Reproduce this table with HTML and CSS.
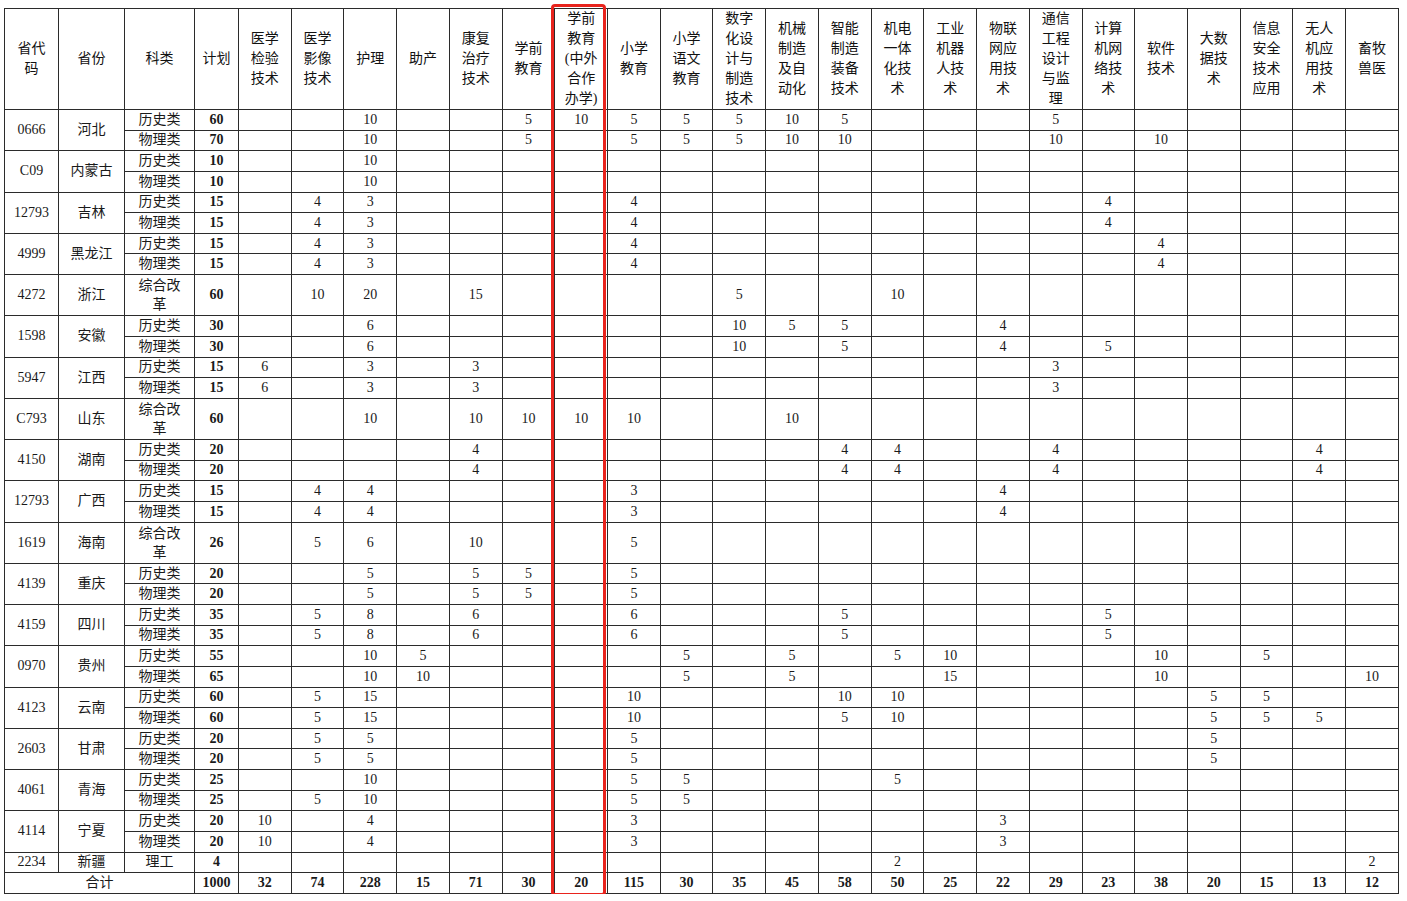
FILE: index.html
```html
<!DOCTYPE html>
<html lang="zh-CN">
<head>
<meta charset="utf-8">
<title>招生计划表</title>
<link rel="stylesheet" href="styles.css">
</head>
<body>
<div class="sheet">
<table class="plan-table">
<colgroup>
<col class="c-code"><col class="c-prov"><col class="c-cat"><col class="c-plan">
<col class="c-major"><col class="c-major"><col class="c-major"><col class="c-major"><col class="c-major"><col class="c-major"><col class="c-major"><col class="c-major"><col class="c-major"><col class="c-major"><col class="c-major">
<col class="c-major"><col class="c-major"><col class="c-major"><col class="c-major"><col class="c-major"><col class="c-major"><col class="c-major"><col class="c-major"><col class="c-major"><col class="c-major"><col class="c-major">
</colgroup>
<thead>
<tr class="head-row">
<th>省代<br>码</th><th>省份</th><th>科类</th><th>计划</th>
<th>医学<br>检验<br>技术</th>
<th>医学<br>影像<br>技术</th>
<th>护理</th>
<th>助产</th>
<th>康复<br>治疗<br>技术</th>
<th>学前<br>教育</th>
<th>学前<br>教育<br>(中外<br>合作<br>办学)</th>
<th>小学<br>教育</th>
<th>小学<br>语文<br>教育</th>
<th>数字<br>化设<br>计与<br>制造<br>技术</th>
<th>机械<br>制造<br>及自<br>动化</th>
<th>智能<br>制造<br>装备<br>技术</th>
<th>机电<br>一体<br>化技<br>术</th>
<th>工业<br>机器<br>人技<br>术</th>
<th>物联<br>网应<br>用技<br>术</th>
<th>通信<br>工程<br>设计<br>与监<br>理</th>
<th>计算<br>机网<br>络技<br>术</th>
<th>软件<br>技术</th>
<th>大数<br>据技<br>术</th>
<th>信息<br>安全<br>技术<br>应用</th>
<th>无人<br>机应<br>用技<br>术</th>
<th>畜牧<br>兽医</th>
</tr>
</thead>
<tbody>
<tr><td rowspan="2">0666</td><td rowspan="2">河北</td><td>历史类</td><td class="bold">60</td>
<td></td><td></td><td>10</td><td></td><td></td><td>5</td><td>10</td><td>5</td><td>5</td><td>5</td><td>10</td><td>5</td><td></td><td></td><td></td><td>5</td><td></td><td></td><td></td><td></td><td></td><td></td></tr>
<tr><td>物理类</td><td class="bold">70</td>
<td></td><td></td><td>10</td><td></td><td></td><td>5</td><td></td><td>5</td><td>5</td><td>5</td><td>10</td><td>10</td><td></td><td></td><td></td><td>10</td><td></td><td>10</td><td></td><td></td><td></td><td></td></tr>

<tr><td rowspan="2">C09</td><td rowspan="2">内蒙古</td><td>历史类</td><td class="bold">10</td>
<td></td><td></td><td>10</td><td></td><td></td><td></td><td></td><td></td><td></td><td></td><td></td><td></td><td></td><td></td><td></td><td></td><td></td><td></td><td></td><td></td><td></td><td></td></tr>
<tr><td>物理类</td><td class="bold">10</td>
<td></td><td></td><td>10</td><td></td><td></td><td></td><td></td><td></td><td></td><td></td><td></td><td></td><td></td><td></td><td></td><td></td><td></td><td></td><td></td><td></td><td></td><td></td></tr>

<tr><td rowspan="2">12793</td><td rowspan="2">吉林</td><td>历史类</td><td class="bold">15</td>
<td></td><td>4</td><td>3</td><td></td><td></td><td></td><td></td><td>4</td><td></td><td></td><td></td><td></td><td></td><td></td><td></td><td></td><td>4</td><td></td><td></td><td></td><td></td><td></td></tr>
<tr><td>物理类</td><td class="bold">15</td>
<td></td><td>4</td><td>3</td><td></td><td></td><td></td><td></td><td>4</td><td></td><td></td><td></td><td></td><td></td><td></td><td></td><td></td><td>4</td><td></td><td></td><td></td><td></td><td></td></tr>

<tr><td rowspan="2">4999</td><td rowspan="2">黑龙江</td><td>历史类</td><td class="bold">15</td>
<td></td><td>4</td><td>3</td><td></td><td></td><td></td><td></td><td>4</td><td></td><td></td><td></td><td></td><td></td><td></td><td></td><td></td><td></td><td>4</td><td></td><td></td><td></td><td></td></tr>
<tr><td>物理类</td><td class="bold">15</td>
<td></td><td>4</td><td>3</td><td></td><td></td><td></td><td></td><td>4</td><td></td><td></td><td></td><td></td><td></td><td></td><td></td><td></td><td></td><td>4</td><td></td><td></td><td></td><td></td></tr>

<tr class="tall"><td>4272</td><td>浙江</td><td class="wrap">综合改<br>革</td><td class="bold">60</td>
<td></td><td>10</td><td>20</td><td></td><td>15</td><td></td><td></td><td></td><td></td><td>5</td><td></td><td></td><td>10</td><td></td><td></td><td></td><td></td><td></td><td></td><td></td><td></td><td></td></tr>

<tr><td rowspan="2">1598</td><td rowspan="2">安徽</td><td>历史类</td><td class="bold">30</td>
<td></td><td></td><td>6</td><td></td><td></td><td></td><td></td><td></td><td></td><td>10</td><td>5</td><td>5</td><td></td><td></td><td>4</td><td></td><td></td><td></td><td></td><td></td><td></td><td></td></tr>
<tr><td>物理类</td><td class="bold">30</td>
<td></td><td></td><td>6</td><td></td><td></td><td></td><td></td><td></td><td></td><td>10</td><td></td><td>5</td><td></td><td></td><td>4</td><td></td><td>5</td><td></td><td></td><td></td><td></td><td></td></tr>

<tr><td rowspan="2">5947</td><td rowspan="2">江西</td><td>历史类</td><td class="bold">15</td>
<td>6</td><td></td><td>3</td><td></td><td>3</td><td></td><td></td><td></td><td></td><td></td><td></td><td></td><td></td><td></td><td></td><td>3</td><td></td><td></td><td></td><td></td><td></td><td></td></tr>
<tr><td>物理类</td><td class="bold">15</td>
<td>6</td><td></td><td>3</td><td></td><td>3</td><td></td><td></td><td></td><td></td><td></td><td></td><td></td><td></td><td></td><td></td><td>3</td><td></td><td></td><td></td><td></td><td></td><td></td></tr>

<tr class="tall"><td>C793</td><td>山东</td><td class="wrap">综合改<br>革</td><td class="bold">60</td>
<td></td><td></td><td>10</td><td></td><td>10</td><td>10</td><td>10</td><td>10</td><td></td><td></td><td>10</td><td></td><td></td><td></td><td></td><td></td><td></td><td></td><td></td><td></td><td></td><td></td></tr>

<tr><td rowspan="2">4150</td><td rowspan="2">湖南</td><td>历史类</td><td class="bold">20</td>
<td></td><td></td><td></td><td></td><td>4</td><td></td><td></td><td></td><td></td><td></td><td></td><td>4</td><td>4</td><td></td><td></td><td>4</td><td></td><td></td><td></td><td></td><td>4</td><td></td></tr>
<tr><td>物理类</td><td class="bold">20</td>
<td></td><td></td><td></td><td></td><td>4</td><td></td><td></td><td></td><td></td><td></td><td></td><td>4</td><td>4</td><td></td><td></td><td>4</td><td></td><td></td><td></td><td></td><td>4</td><td></td></tr>

<tr><td rowspan="2">12793</td><td rowspan="2">广西</td><td>历史类</td><td class="bold">15</td>
<td></td><td>4</td><td>4</td><td></td><td></td><td></td><td></td><td>3</td><td></td><td></td><td></td><td></td><td></td><td></td><td>4</td><td></td><td></td><td></td><td></td><td></td><td></td><td></td></tr>
<tr><td>物理类</td><td class="bold">15</td>
<td></td><td>4</td><td>4</td><td></td><td></td><td></td><td></td><td>3</td><td></td><td></td><td></td><td></td><td></td><td></td><td>4</td><td></td><td></td><td></td><td></td><td></td><td></td><td></td></tr>

<tr class="tall"><td>1619</td><td>海南</td><td class="wrap">综合改<br>革</td><td class="bold">26</td>
<td></td><td>5</td><td>6</td><td></td><td>10</td><td></td><td></td><td>5</td><td></td><td></td><td></td><td></td><td></td><td></td><td></td><td></td><td></td><td></td><td></td><td></td><td></td><td></td></tr>

<tr><td rowspan="2">4139</td><td rowspan="2">重庆</td><td>历史类</td><td class="bold">20</td>
<td></td><td></td><td>5</td><td></td><td>5</td><td>5</td><td></td><td>5</td><td></td><td></td><td></td><td></td><td></td><td></td><td></td><td></td><td></td><td></td><td></td><td></td><td></td><td></td></tr>
<tr><td>物理类</td><td class="bold">20</td>
<td></td><td></td><td>5</td><td></td><td>5</td><td>5</td><td></td><td>5</td><td></td><td></td><td></td><td></td><td></td><td></td><td></td><td></td><td></td><td></td><td></td><td></td><td></td><td></td></tr>

<tr><td rowspan="2">4159</td><td rowspan="2">四川</td><td>历史类</td><td class="bold">35</td>
<td></td><td>5</td><td>8</td><td></td><td>6</td><td></td><td></td><td>6</td><td></td><td></td><td></td><td>5</td><td></td><td></td><td></td><td></td><td>5</td><td></td><td></td><td></td><td></td><td></td></tr>
<tr><td>物理类</td><td class="bold">35</td>
<td></td><td>5</td><td>8</td><td></td><td>6</td><td></td><td></td><td>6</td><td></td><td></td><td></td><td>5</td><td></td><td></td><td></td><td></td><td>5</td><td></td><td></td><td></td><td></td><td></td></tr>

<tr><td rowspan="2">0970</td><td rowspan="2">贵州</td><td>历史类</td><td class="bold">55</td>
<td></td><td></td><td>10</td><td>5</td><td></td><td></td><td></td><td></td><td>5</td><td></td><td>5</td><td></td><td>5</td><td>10</td><td></td><td></td><td></td><td>10</td><td></td><td>5</td><td></td><td></td></tr>
<tr><td>物理类</td><td class="bold">65</td>
<td></td><td></td><td>10</td><td>10</td><td></td><td></td><td></td><td></td><td>5</td><td></td><td>5</td><td></td><td></td><td>15</td><td></td><td></td><td></td><td>10</td><td></td><td></td><td></td><td>10</td></tr>

<tr><td rowspan="2">4123</td><td rowspan="2">云南</td><td>历史类</td><td class="bold">60</td>
<td></td><td>5</td><td>15</td><td></td><td></td><td></td><td></td><td>10</td><td></td><td></td><td></td><td>10</td><td>10</td><td></td><td></td><td></td><td></td><td></td><td>5</td><td>5</td><td></td><td></td></tr>
<tr><td>物理类</td><td class="bold">60</td>
<td></td><td>5</td><td>15</td><td></td><td></td><td></td><td></td><td>10</td><td></td><td></td><td></td><td>5</td><td>10</td><td></td><td></td><td></td><td></td><td></td><td>5</td><td>5</td><td>5</td><td></td></tr>

<tr><td rowspan="2">2603</td><td rowspan="2">甘肃</td><td>历史类</td><td class="bold">20</td>
<td></td><td>5</td><td>5</td><td></td><td></td><td></td><td></td><td>5</td><td></td><td></td><td></td><td></td><td></td><td></td><td></td><td></td><td></td><td></td><td>5</td><td></td><td></td><td></td></tr>
<tr><td>物理类</td><td class="bold">20</td>
<td></td><td>5</td><td>5</td><td></td><td></td><td></td><td></td><td>5</td><td></td><td></td><td></td><td></td><td></td><td></td><td></td><td></td><td></td><td></td><td>5</td><td></td><td></td><td></td></tr>

<tr><td rowspan="2">4061</td><td rowspan="2">青海</td><td>历史类</td><td class="bold">25</td>
<td></td><td></td><td>10</td><td></td><td></td><td></td><td></td><td>5</td><td>5</td><td></td><td></td><td></td><td>5</td><td></td><td></td><td></td><td></td><td></td><td></td><td></td><td></td><td></td></tr>
<tr><td>物理类</td><td class="bold">25</td>
<td></td><td>5</td><td>10</td><td></td><td></td><td></td><td></td><td>5</td><td>5</td><td></td><td></td><td></td><td></td><td></td><td></td><td></td><td></td><td></td><td></td><td></td><td></td><td></td></tr>

<tr><td rowspan="2">4114</td><td rowspan="2">宁夏</td><td>历史类</td><td class="bold">20</td>
<td>10</td><td></td><td>4</td><td></td><td></td><td></td><td></td><td>3</td><td></td><td></td><td></td><td></td><td></td><td></td><td>3</td><td></td><td></td><td></td><td></td><td></td><td></td><td></td></tr>
<tr><td>物理类</td><td class="bold">20</td>
<td>10</td><td></td><td>4</td><td></td><td></td><td></td><td></td><td>3</td><td></td><td></td><td></td><td></td><td></td><td></td><td>3</td><td></td><td></td><td></td><td></td><td></td><td></td><td></td></tr>

<tr><td>2234</td><td>新疆</td><td>理工</td><td class="bold">4</td>
<td></td><td></td><td></td><td></td><td></td><td></td><td></td><td></td><td></td><td></td><td></td><td></td><td>2</td><td></td><td></td><td></td><td></td><td></td><td></td><td></td><td></td><td>2</td></tr>

<tr class="total"><td colspan="3" class="total-label">合计</td><td>1000</td>
<td>32</td><td>74</td><td>228</td><td>15</td><td>71</td><td>30</td><td>20</td><td>115</td><td>30</td><td>35</td><td>45</td><td>58</td><td>50</td><td>25</td><td>22</td><td>29</td><td>23</td><td>38</td><td>20</td><td>15</td><td>13</td><td>12</td></tr>
</tbody>
</table>
<div class="highlight"></div>
</div>
</body>
</html>
```
FILE: styles.css
```css
html, body {
  margin: 0;
  padding: 0;
  background: #ffffff;
}

.sheet {
  position: relative;
  margin: 8px 0 0 4px;
  width: 1395px;
}

.plan-table {
  border-collapse: collapse;
  table-layout: fixed;
  width: 1395px;
  font-family: "Liberation Serif", "Noto Sans CJK SC", serif;
  font-size: 14px;
  color: #1a1a1a;
}

.c-code { width: 54px; }
.c-prov { width: 66px; }
.c-cat { width: 70px; }
.c-plan { width: 44px; }
.c-major { width: 52.73px; }

.plan-table th,
.plan-table td {
  border: 1px solid #2b2b2b;
  padding: 0;
  text-align: center;
  vertical-align: middle;
  white-space: nowrap;
  overflow: hidden;
}

.plan-table th {
  font-weight: normal;
  line-height: 20px;
  color: #111;
}

.head-row {
  height: 101px;
}

.plan-table tbody tr {
  height: 20.63px;
}

.plan-table tbody tr.tall {
  height: 41.26px;
}

.plan-table td {
  line-height: 18px;
}

.plan-table td.wrap {
  line-height: 19px;
}

.bold {
  font-weight: bold;
}

.total td {
  font-weight: bold;
}

.total td.total-label {
  font-weight: normal;
}

.highlight {
  position: absolute;
  left: 547px;
  top: -4px;
  width: 49px;
  height: 886px;
  border: 3px solid #e8231d;
  border-radius: 4px;
  pointer-events: none;
}
```
